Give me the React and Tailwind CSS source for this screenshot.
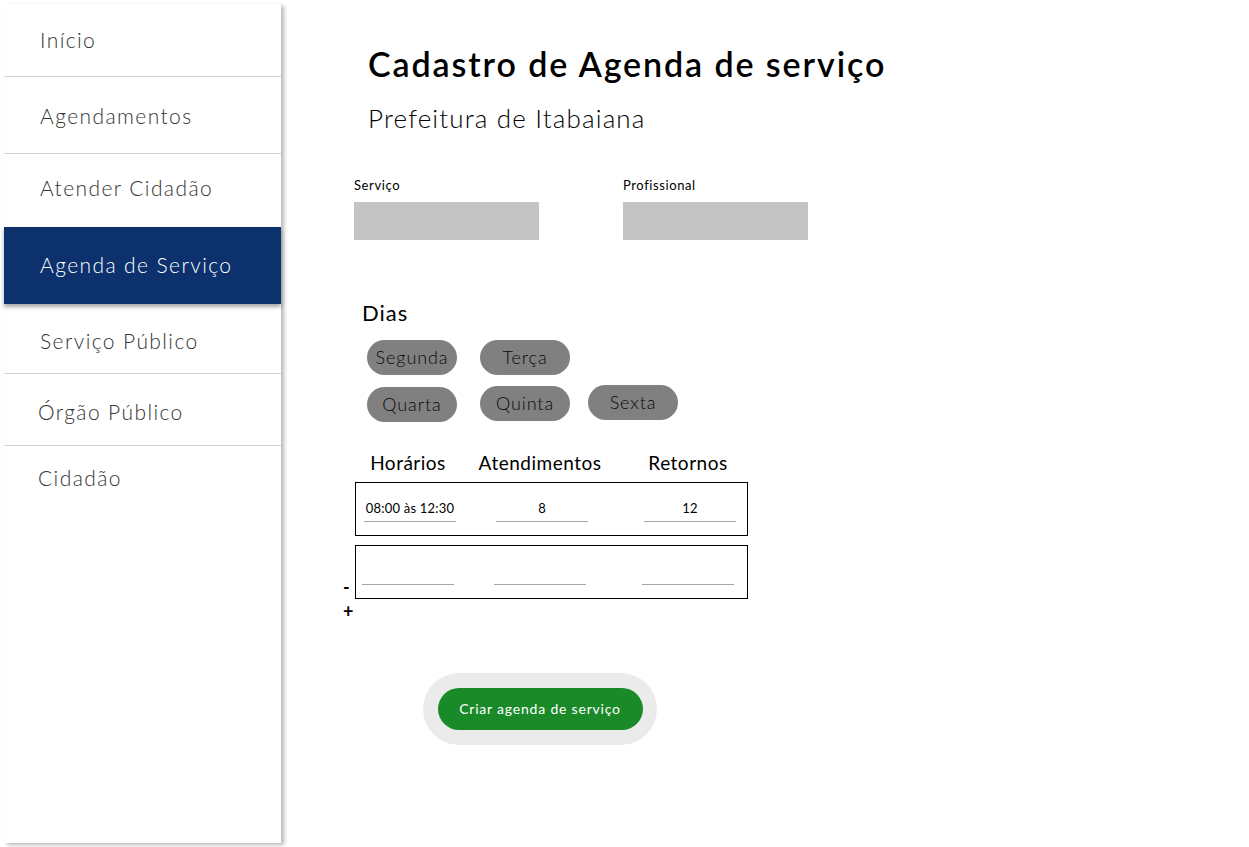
import React from 'react';

const menu = [
  { label: 'Início', h: 'h-[73px]', pl: 'pl-[36px]' },
  { label: 'Agendamentos', h: 'h-[77px]', pl: 'pl-[36px] pt-[1px]' },
  { label: 'Atender Cidadão', h: 'h-[73px]', pl: 'pl-[36px] pb-[5px]', noBorder: true },
  { label: 'Agenda de Serviço', h: 'h-[77px]', pl: 'pl-[36px] pb-[1px]', active: true },
  { label: 'Serviço Público', h: 'h-[70px]', pl: 'pl-[36px] pt-[4px]' },
  { label: 'Órgão Público', h: 'h-[72px]', pl: 'pl-[34px] pt-[4px]' },
  { label: 'Cidadão', h: 'h-[64px]', pl: 'pl-[34px]', noBorder: true },
];

const font = { fontFamily: 'Lato, "Noto Sans", sans-serif' };

const Chip = ({ children, className = '' }) => (
  <div className={`w-[90px] h-[35px] rounded-full bg-[#808080] flex items-center justify-center text-[18px] font-light tracking-[0.9px] text-[#0a0a0a] ${className}`}>
    {children}
  </div>
);

const Cell = ({ value, ml }) => (
  <div className={`w-[92px] ${ml} pt-[17px]`}>
    <div className="h-[16px] leading-[16px] text-[13px] text-center text-black whitespace-nowrap tracking-[0.2px]">{value}</div>
    <div className="mt-[5px] border-b border-[#a8a8a8]" />
  </div>
);

export default function App() {
  return (
    <div className="flex min-h-[847px] bg-white" style={font}>
      {/* Sidebar */}
      <div className="p-1 shrink-0">
        <aside className="w-[277px] h-[839px] bg-white shadow-[3px_2px_4px_rgba(0,0,0,0.28)] flex flex-col">
          {menu.map((item) => (
            <div
              key={item.label}
              className={`${item.h} ${item.pl} flex items-center text-[21px] font-light tracking-[1.4px] ${
                item.active
                  ? 'bg-[#0c316d] text-white relative z-10 shadow-[0_3px_4px_rgba(0,0,0,0.35)]'
                  : 'text-[#333] ' + (item.noBorder ? '' : 'border-b border-[#d2d2d2]')
              }`}
            >
              {item.label}
            </div>
          ))}
        </aside>
      </div>

      {/* Main */}
      <main className="flex-1 pl-[69px] pt-[44px] text-black">
        <h1 className="ml-[14px] text-[34px] leading-[40px] font-semibold tracking-[1.9px]">
          Cadastro de Agenda de serviço
        </h1>
        <p className="ml-[14px] mt-[18px] text-[26px] leading-[32px] font-light tracking-[1.15px]">
          Prefeitura de Itabaiana
        </p>

        <div className="flex gap-[84px] mt-[43px]">
          {['Serviço', 'Profissional'].map((l) => (
            <div key={l}>
              <div className="text-[13px] leading-[16px] tracking-[0.6px]">{l}</div>
              <div className="mt-[9px] w-[185px] h-[38px] bg-[#c4c4c4]" />
            </div>
          ))}
        </div>

        <h2 className="ml-[8px] mt-[59px] text-[22px] leading-[28px] tracking-[1px]">Dias</h2>
        <div className="ml-[13px] mt-[13px] flex gap-[23px]">
          <Chip>Segunda</Chip>
          <Chip>Terça</Chip>
        </div>
        <div className="ml-[13px] mt-[10px] flex items-start">
          <Chip className="mt-[2px]">Quarta</Chip>
          <Chip className="mt-[1px] ml-[23px]">Quinta</Chip>
          <Chip className="ml-[18px]">Sexta</Chip>
        </div>

        <div className="ml-[1px] mt-[29px] w-[393px] flex pl-[7px] text-[19px] leading-[24px] tracking-[0.5px]">
          <div className="w-[92px] flex justify-center whitespace-nowrap">Horários</div>
          <div className="w-[92px] ml-[40px] flex justify-center whitespace-nowrap">Atendimentos</div>
          <div className="w-[92px] ml-[56px] flex justify-center whitespace-nowrap">Retornos</div>
        </div>

        <div className="ml-[1px] mt-[7px] w-[393px] h-[54px] border border-black flex pl-[8px]">
          <Cell value="08:00 às 12:30" ml="" />
          <Cell value="8" ml="ml-[40px]" />
          <Cell value="12" ml="ml-[56px]" />
        </div>

        <div className="-ml-[11px] mt-[9px] flex items-end">
          <span className="w-[12px] mb-[4px] text-[18px] leading-[16px] font-bold">-</span>
          <div className="w-[393px] h-[54px] border border-black flex pl-[6px]">
            <Cell value="" ml="" />
            <Cell value="" ml="ml-[40px]" />
            <Cell value="" ml="ml-[56px]" />
          </div>
        </div>
        <div className="-ml-[11px] mt-[4px] text-[18px] leading-[16px] font-bold">+</div>

        <div className="ml-[69px] mt-[54px] w-[234px] h-[72px] rounded-full bg-[#ebebeb] flex items-center justify-center">
          <button className="w-[205px] h-[42px] pb-[2px] rounded-full bg-[#1a8a28] text-white text-[14px] tracking-[0.8px]">
            Criar agenda de serviço
          </button>
        </div>
      </main>
    </div>
  );
}
